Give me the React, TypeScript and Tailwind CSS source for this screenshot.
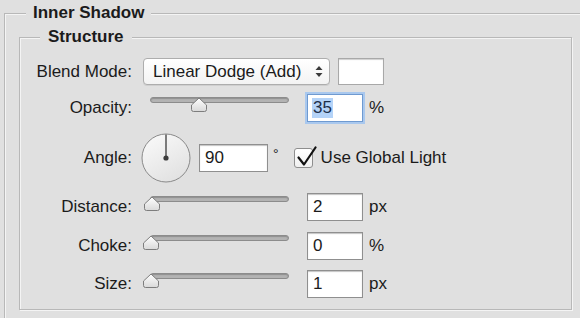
import type { ReactNode } from 'react';

function Label({ children }: { children: ReactNode }) {
  return <div className="w-[112px] shrink-0 text-right leading-[20px]">{children}</div>;
}

function Thumb() {
  return (
    <svg width="18" height="16" viewBox="0 0 18 16">
      <defs>
        <linearGradient id="tg" x1="0" y1="0" x2="0" y2="1">
          <stop offset="0" stopColor="#ffffff" />
          <stop offset="1" stopColor="#d9d9d9" />
        </linearGradient>
      </defs>
      <path d="M9 1 L16.5 8 V12.5 Q16.5 14.5 14.5 14.5 H3.5 Q1.5 14.5 1.5 12.5 V8 Z" fill="url(#tg)" stroke="#7d7d7d" strokeWidth="1" />
    </svg>
  );
}

// slider box spans x 142..307, track from thumb centre onwards
function Slider({ pos }: { pos: number }) {
  return (
    <div className="relative h-full w-[165px] shrink-0">
      <div className="absolute left-[8px] top-[3px] h-[6px] w-[139px] rounded-full border border-[#8c8c8c] bg-[#b3b3b3] shadow-[inset_0_1px_1px_#8f8f8f]" />
      <div className="absolute top-[3px]" style={{ left: pos }}>
        <Thumb />
      </div>
    </div>
  );
}

function Field({ children, w = 'w-[56px]' }: { children: ReactNode; w?: string }) {
  return (
    <div className={`${w} flex h-[28px] shrink-0 items-center border border-[#8f8f8f] bg-white pl-[5px] shadow-[inset_0_1px_1px_#c4c4c4]`}>
      {children}
    </div>
  );
}

function SliderRow({ label, pos, value, unit, mt }: { label: string; pos: number; value: string; unit: string; mt: string }) {
  return (
    <div className={`${mt} flex h-[28px] items-center`}>
      <Label>{label}</Label>
      <div className="ml-[10px] h-full">
        <Slider pos={pos} />
      </div>
      <Field>{value}</Field>
      <span className="ml-[6px]">{unit}</span>
    </div>
  );
}

export default function App() {
  return (
    <div className="h-[318px] w-[580px] overflow-hidden bg-[#e0e0e0] font-['Liberation_Sans',Arial,sans-serif] text-[17px] text-[#1b1b1b]">
      <fieldset className="ml-[4px] mt-[3px] h-[340px] w-[600px] border border-[#b8b8b8] p-0 shadow-[inset_1px_1px_0_#f4f4f4]">
        <legend className="ml-[21px] bg-[#e0e0e0] px-[7px] font-bold leading-[20px]">Inner Shadow</legend>

        <fieldset className="ml-[14px] mt-[4px] w-[553px] border border-[#b8b8b8] px-0 pb-[11px] pt-[11px] shadow-[inset_1px_1px_0_#f4f4f4,1px_1px_0_#f4f4f4]">
          <legend className="ml-[20px] bg-[#e0e0e0] px-[8px] font-bold leading-[20px]">Structure</legend>

          {/* Blend mode */}
          <div className="flex h-[27px] items-center">
            <Label>Blend Mode:</Label>
            <div className="ml-[11px] flex h-[27px] w-[187px] items-center justify-between rounded-[4px] border border-[#adadad] bg-gradient-to-b from-white to-[#f3f3f3] pl-[9px] pr-[6px] shadow-[0_1px_0_#cfcfcf]">
              <span className="leading-[20px]">Linear Dodge (Add)</span>
              <svg width="8" height="13" viewBox="0 0 8 13">
                <path d="M4 1 L7.5 5 H0.5 Z" fill="#3a3a3a" />
                <path d="M4 12 L7.5 8 H0.5 Z" fill="#3a3a3a" />
              </svg>
            </div>
            <div className="ml-[8px] h-[27px] w-[46px] border border-[#a8a8a8] bg-white shadow-[inset_0_1px_1px_#cfcfcf]" />
          </div>

          {/* Opacity */}
          <div className="mt-[9px] flex h-[28px] items-center">
            <Label>Opacity:</Label>
            <div className="ml-[10px] h-full">
              <Slider pos={48} />
            </div>
            <div className="flex h-[28px] w-[56px] shrink-0 items-center border border-[#6f9ad0] bg-white pl-[4px] shadow-[0_0_0_2px_#a9c8ee]">
              <span className="bg-[#b4d3f8] px-px leading-[20px] text-[#1d2f4a]">35</span>
            </div>
            <span className="ml-[6px]">%</span>
          </div>

          {/* Angle */}
          <div className="mt-[11px] flex h-[50px] items-center">
            <Label>Angle:</Label>
            <div className="ml-[9px] shrink-0">
              <svg width="50" height="50" viewBox="0 0 50 50">
                <defs>
                  <linearGradient id="dg" x1="0" y1="0" x2="0.6" y2="1">
                    <stop offset="0" stopColor="#fbfbfb" />
                    <stop offset="1" stopColor="#e2e2e2" />
                  </linearGradient>
                </defs>
                <circle cx="25" cy="25" r="24" fill="url(#dg)" stroke="#8a8a8a" strokeWidth="1" />
                <line x1="25" y1="25" x2="25" y2="1.5" stroke="#3c3c3c" strokeWidth="1.3" />
                <circle cx="25" cy="25" r="2.6" fill="#3c3c3c" />
              </svg>
            </div>
            <div className="ml-[8px]">
              <Field w="w-[69px]">90</Field>
            </div>
            <span className="mb-[8px] ml-[5px] text-[14px]">°</span>
            <div className="relative ml-[15px] h-[20px] w-[19px] shrink-0 rounded-[3px] border border-[#8e8e8e] bg-gradient-to-b from-white to-[#f0f0f0]">
              <svg className="absolute left-[1px] top-[-3px]" width="22" height="22" viewBox="0 0 22 22">
                <path d="M2.5 11.5 L8 18.5 L19.5 1.5" fill="none" stroke="#111" strokeWidth="2.2" strokeLinecap="round" strokeLinejoin="round" />
              </svg>
            </div>
            <span className="ml-[8px] leading-[20px]">Use Global Light</span>
          </div>

          <SliderRow mt="mt-[10px]" label="Distance:" pos={1} value="2" unit="px" />
          <SliderRow mt="mt-[11px]" label="Choke:" pos={0} value="0" unit="%" />
          <SliderRow mt="mt-[10px]" label="Size:" pos={0} value="1" unit="px" />
        </fieldset>
      </fieldset>
    </div>
  );
}
